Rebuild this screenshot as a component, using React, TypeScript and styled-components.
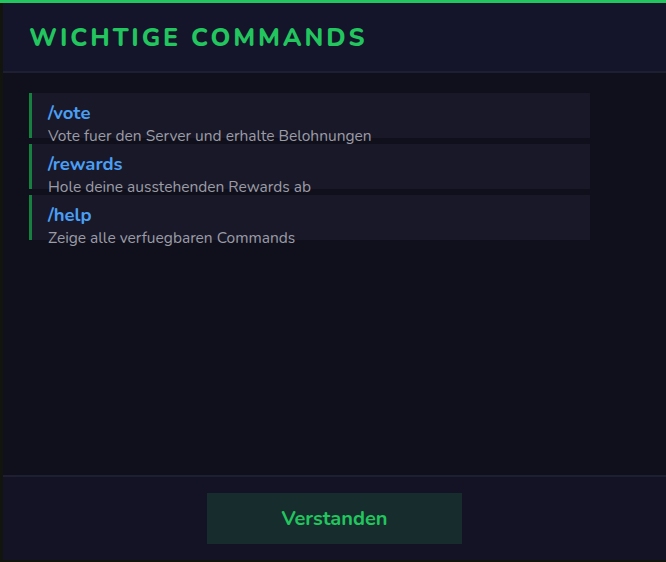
import React from 'react';
import styled, { createGlobalStyle } from 'styled-components';

const GlobalStyle = createGlobalStyle`
  html, body {
    margin: 0;
    padding: 0;
    background-color: #12140e;
    overflow: hidden;
  }
  body {
    font-family: 'Nunito', 'Noto Sans', 'Open Sans', sans-serif;
  }
`;

const Page = styled.div`
  width: 666px;
  height: 562px;
  overflow: hidden;
  border-top: 3px solid #22c55e;
  box-sizing: border-box;
`;

const Modal = styled.div`
  display: flex;
  flex-direction: column;
  margin-left: 3px;
  width: 700px;
  height: 557px;
  background-color: #10101d;
`;

const Header = styled.div`
  display: flex;
  align-items: center;
  height: 68px;
  padding: 0 26px;
  background-color: #14152a;
  border-bottom: 2px solid #1e1f30;
`;

const Title = styled.h2`
  margin: 0;
  padding-top: 1px;
  font-size: 25px;
  font-weight: 800;
  letter-spacing: 2.9px;
  color: #22c55e;
  text-transform: uppercase;
`;

const Body = styled.div`
  flex: 1;
  display: flex;
  flex-direction: column;
  gap: 6px;
  padding: 20px 26px;
`;

const Item = styled.div`
  width: 561px;
  height: 45px;
  padding: 7px 16px 0;
  box-sizing: border-box;
  background-color: #181828;
  border-left: 3px solid #16803f;
`;

const Command = styled.div`
  font-size: 18.5px;
  font-weight: 700;
  line-height: 26px;
  color: #4a9ff5;
`;

const Description = styled.div`
  font-size: 15.5px;
  line-height: 20px;
  color: #9c9ca6;
`;

const Footer = styled.div`
  display: flex;
  padding: 16px 0 16px 204px;
  background-color: #131325;
  border-top: 2px solid #1e1f30;
`;

const Button = styled.button`
  width: 255px;
  height: 51px;
  border: none;
  background-color: #172c2d;
  color: #22c55e;
  font-family: inherit;
  font-size: 20px;
  font-weight: 700;
  cursor: pointer;
`;

const commands = [
  { name: '/vote', text: 'Vote fuer den Server und erhalte Belohnungen' },
  { name: '/rewards', text: 'Hole deine ausstehenden Rewards ab' },
  { name: '/help', text: 'Zeige alle verfuegbaren Commands' },
];

export default function App() {
  return (
    <Page>
      <GlobalStyle />
      <Modal>
        <Header>
          <Title>Wichtige Commands</Title>
        </Header>
        <Body>
          {commands.map((cmd) => (
            <Item key={cmd.name}>
              <Command>{cmd.name}</Command>
              <Description>{cmd.text}</Description>
            </Item>
          ))}
        </Body>
        <Footer>
          <Button>Verstanden</Button>
        </Footer>
      </Modal>
    </Page>
  );
}
